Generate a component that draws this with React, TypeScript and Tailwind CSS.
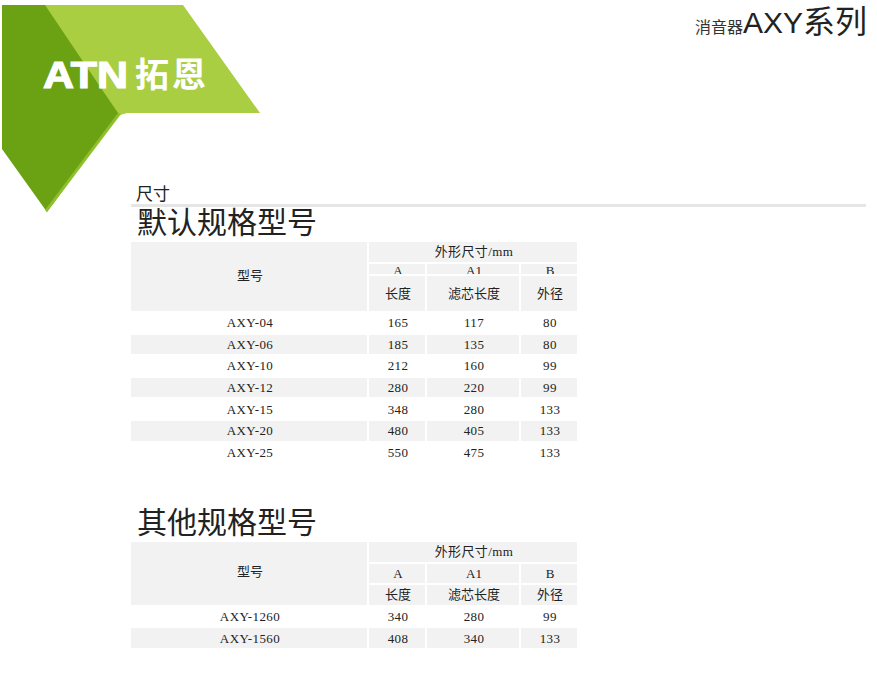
const cjk = '"Liberation Sans","Noto Sans CJK SC",sans-serif';

const defaultRows = [
  ['AXY-04', '165', '117', '80'],
  ['AXY-06', '185', '135', '80'],
  ['AXY-10', '212', '160', '99'],
  ['AXY-12', '280', '220', '99'],
  ['AXY-15', '348', '280', '133'],
  ['AXY-20', '480', '405', '133'],
  ['AXY-25', '550', '475', '133'],
];

const otherRows = [
  ['AXY-1260', '340', '280', '99'],
  ['AXY-1560', '408', '340', '133'],
];

function Logo() {
  return (
    <svg width="262" height="214" viewBox="0 0 262 214" className="shrink-0 mt-[3px]">
      <polygon points="2,2 46,2 120,110 47,209 2,146" fill="#6ba213" />
      <polygon points="45,2 183,2 260,110 127,110 120,112 118,110 80,54" fill="#a9ce42" />
      <polygon points="118,110 121,111 47,209 45,207" fill="#8fc02b" />
      <text x="43" y="85" fill="#fff" stroke="#fff" strokeWidth="1.2" fontFamily="Liberation Sans" fontWeight="700" fontSize="37" textLength="85" lengthAdjust="spacingAndGlyphs">ATN</text>
      <text x="135" y="84" fill="#fff" fontFamily="Noto Sans CJK SC" fontWeight="700" fontSize="34" textLength="71">拓恩</text>
    </svg>
  );
}

function SpecTable({ rows, compact }: { rows: string[][]; compact?: boolean }) {
  return (
    <table className="-mx-[2px] border-separate border-spacing-[2px] table-fixed w-[450px] text-[13px] text-[#222] text-center font-['Liberation_Serif','Noto_Sans_CJK_SC',serif]">
      <colgroup>
        <col className="w-[236px]" />
        <col className="w-[56px]" />
        <col className="w-[92px]" />
        <col className="w-[56px]" />
      </colgroup>
      <thead>
        <tr className="h-[20px]">
          <th rowSpan={3} className="bg-[#f2f2f2] font-normal p-0 pl-[2px] align-middle">
            <span className={compact ? 'relative -top-[2px]' : 'relative -top-[1px]'}>型号</span>
          </th>
          <th colSpan={3} className="bg-[#f2f2f2] font-normal p-0 pl-[2px] tracking-[0.4px]">外形尺寸/mm</th>
        </tr>
        <tr className={compact ? 'h-[19px]' : 'h-[10px]'}>
          {['A', 'A1', 'B'].map((t) => (
            <th key={t} className="bg-[#f2f2f2] font-normal p-0 pl-[2px]">
              <div className={compact ? 'h-[19px] leading-[19px]' : 'h-[10px] leading-[13px] overflow-hidden'}>{t}</div>
            </th>
          ))}
        </tr>
        <tr className={compact ? 'h-[19px]' : 'h-[35px]'}>
          <th className="bg-[#f2f2f2] font-normal p-0 pl-[2px]">长度</th>
          <th className="bg-[#f2f2f2] font-normal p-0 pl-[2px]">滤芯长度</th>
          <th className="bg-[#f2f2f2] font-normal p-0 pl-[2px]">外径</th>
        </tr>
      </thead>
      <tbody>
        {rows.map((row, i) => (
          <tr key={row[0]} className="h-[19.6px]">
            {row.map((cell, j) => (
              <td key={j} className={`p-0 pl-[2px] leading-[19px] tracking-[0.4px] ${i % 2 ? 'bg-[#f2f2f2]' : ''}`}>{cell}</td>
            ))}
          </tr>
        ))}
      </tbody>
    </table>
  );
}

export default function App() {
  return (
    <div className="w-[877px] h-[679px] bg-white text-[#222] overflow-hidden" style={{ fontFamily: cjk }}>
      <header className="h-[185px] flex justify-between items-start pr-[10px]">
        <Logo />
        <h1 className="font-normal text-[30px] leading-[34px] mt-[5px] flex items-baseline">
          <span className="text-[16px] text-[#333]">消音器</span>AXY<span className="text-[32px]">系列</span>
        </h1>
      </header>

      <main className="ml-[131px] mr-[11px]">
        <div className="relative z-10 pl-[5px] text-[17px] leading-[19px] border-b-[3px] border-[#e6e6e6]">尺寸</div>
        <h2 className="font-normal text-[30px] leading-[32px] pl-[6px] mb-[1px]">默认规格型号</h2>
        <SpecTable rows={defaultRows} />
        <h2 className="font-normal text-[30px] leading-[32px] pl-[6px] mt-[43px] mb-[1px]">其他规格型号</h2>
        <SpecTable rows={otherRows} compact />
      </main>
    </div>
  );
}
